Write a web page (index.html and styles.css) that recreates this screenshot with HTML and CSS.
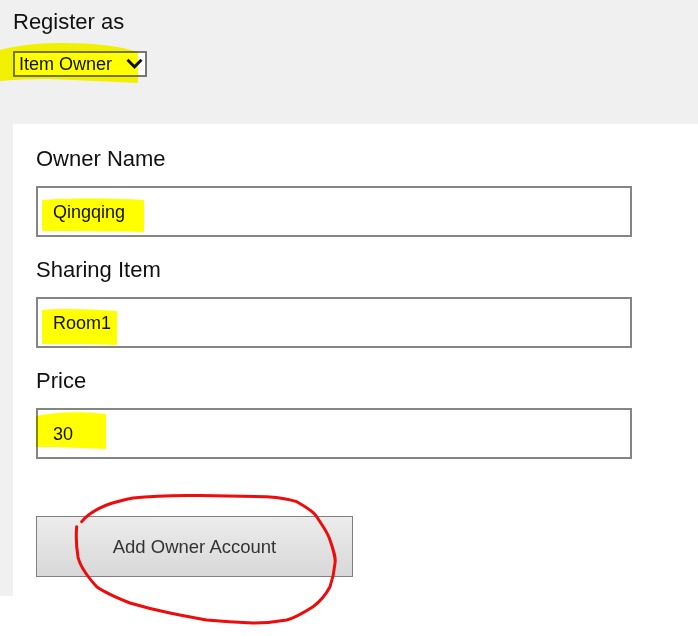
FILE: index.html
```html
<!DOCTYPE html>
<html>
<head>
<meta charset="utf-8">
<link rel="stylesheet" href="styles.css">
</head>
<body>
<div class="page">
  <div class="header">
    <div class="title">Register as</div>
    <div class="select-wrap">
      <select class="role">
        <option>Item Owner</option>
      </select>
      <svg class="chev" width="17" height="11" viewBox="0 0 17 11"><path d="M1.5 1.8 L8.5 8.8 L15.5 1.8" fill="none" stroke="#111" stroke-width="3"/></svg>
    </div>
  </div>
  <div class="panel">
    <div class="field">
      <label class="label">Owner Name</label>
      <input class="input" type="text" value="Qingqing">
    </div>
    <div class="field">
      <label class="label">Sharing Item</label>
      <input class="input" type="text" value="Room1">
    </div>
    <div class="field">
      <label class="label">Price</label>
      <input class="input" type="text" value="30">
    </div>
    <button class="btn">Add Owner Account</button>
  </div>
</div>
<svg class="marks" width="698" height="636" viewBox="0 0 698 636">
  <g class="hl" fill="#ffff00">
    <path d="M0 50 C15 46 35 43 60 43 C95 43 120 46 138 52 L138 83 C110 82 80 80 50 79 C25 79 10 80 0 81 Z"/>
    <path d="M42 200 C70 198 110 198 144 200 L144 232 C110 231 75 231 42 231 Z"/>
    <path d="M42 310 C60 308 90 309 117 311 L117 345 C95 344 65 344 42 344 Z"/>
    <path d="M36 416 C55 412 80 411 106 414 L106 449 C85 448 60 447 36 447 Z"/>
  </g>
  <path class="circle" d="M81.7 521.7 C86 516 92 511 106.7 505 C118 501 128 499 133 498 C150 496 165 495 200 495.5 C230 496 250 496.5 266.7 496.7 C285 498 292 500 296.7 501.7 C308 508 314 512 316.7 516.7 C324 528 328 533 330 540 C334 552 336 558 335 563 C334 575 332 581 330 586.7 C324 598 318 603 313 606.7 C300 615 294 618 286.7 620 C270 623 262 623 253 623 C230 622 218 621 206.7 620 C190 617 180 615 170 613 C150 609 140 606 130 603 C115 597 104 592 96.7 586.7 C86 575 80 566 78 557 C76 545 76 535 76.7 526.7" fill="none" stroke="#ee0b0b" stroke-width="3" stroke-linecap="round"/>
</svg>
</body>
</html>
```

FILE: styles.css
```css
* { box-sizing: border-box; }
html, body { margin: 0; padding: 0; background: #ffffff; }
body {
  font-family: "Liberation Sans", Arial, sans-serif;
  color: #111;
  width: 698px;
  height: 636px;
  overflow: hidden;
  position: relative;
}
.page {
  background: #f0f0f0;
  height: 596px;
  display: flex;
  flex-direction: column;
}
.header {
  padding: 9px 0 0 13px;
  height: 125px;
}
.title {
  font-size: 22px;
  line-height: 26px;
  margin-bottom: 16px;
}
.select-wrap {
  position: relative;
  width: 134px;
  height: 26px;
}
.role {
  appearance: none;
  -webkit-appearance: none;
  width: 134px;
  height: 26px;
  border: 2px solid #767676;
  border-radius: 0;
  background: #ffffff;
  font-family: "Liberation Sans", Arial, sans-serif;
  font-size: 18px;
  color: #111;
  padding: 0 0 0 4px;
  margin: 0;
  line-height: 22px;
}
.chev {
  position: absolute;
  left: 113px;
  top: 7px;
}
.panel {
  flex: 1;
  background: #ffffff;
  margin-left: 13px;
  padding: 22px 0 19px 23px;
  display: flex;
  flex-direction: column;
  align-items: flex-start;
}
.field {
  display: flex;
  flex-direction: column;
  margin-bottom: 20px;
}
.field:last-of-type { margin-bottom: 57px; }
.label {
  font-size: 22px;
  line-height: 26px;
  margin-bottom: 14px;
}
.input {
  width: 596px;
  height: 51px;
  border: 2px solid #858585;
  border-radius: 0;
  padding: 2px 0 0 15px;
  font-family: "Liberation Sans", Arial, sans-serif;
  font-size: 18px;
  color: #111;
  background: #fff;
  outline: none;
  margin: 0;
}
.btn {
  width: 317px;
  height: 61px;
  border: 1px solid #808080;
  border-radius: 0;
  background: linear-gradient(#ececec, #d8d8d8);
  font-family: "Liberation Sans", Arial, sans-serif;
  font-size: 18.5px;
  color: #333;
  margin: 0;
  padding: 0;
}
.marks {
  position: absolute;
  top: 0;
  left: 0;
  pointer-events: none;
}
.hl path { mix-blend-mode: multiply; }
```
